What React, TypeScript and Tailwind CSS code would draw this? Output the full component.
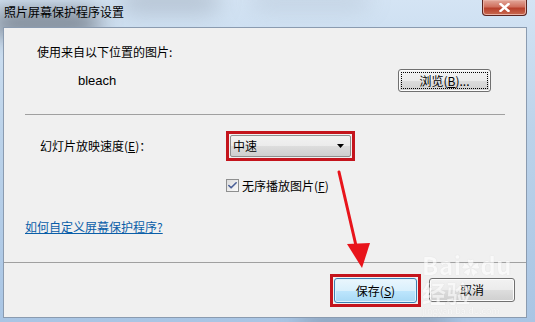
import { Check } from "lucide-react";

const font = { fontFamily: '"Noto Sans CJK SC", "Liberation Sans", sans-serif' };

function Win7Button({ label, focused }: { label: React.ReactNode; focused?: boolean }) {
  return (
    <div
      className={
        focused
          ? "flex h-full w-full items-center justify-center rounded-[3px] border border-[#3c7fb1] bg-[linear-gradient(to_bottom,#eaf6fd_0%,#d9f0fc_50%,#bee6fd_51%,#a7d9f5_100%)] text-[12px] text-black shadow-[inset_0_0_0_1px_#dff2fc]"
          : "flex h-full w-full items-center justify-center rounded-[3px] border border-[#707070] bg-[linear-gradient(to_bottom,#f2f2f2_0%,#ebebeb_50%,#dddddd_51%,#cfcfcf_100%)] text-[12px] text-black shadow-[inset_0_0_0_1px_#fcfcfc]"
      }
    >
      {label}
    </div>
  );
}

function Arrow() {
  return (
    <svg className="pointer-events-none absolute left-0 top-0" width="535" height="322">
      <line x1="339" y1="172" x2="357" y2="250" stroke="#e8141b" strokeWidth="3" strokeLinecap="round" />
      <polygon points="347,244 370,243 362,268" fill="#e8141b" />
    </svg>
  );
}

export default function App() {
  return (
    <div
      className="relative h-[322px] w-[535px] overflow-hidden bg-[linear-gradient(to_bottom,#d4e4f4,#bcd3ea_40%,#a9c5e4)]"
      style={font}
    >
      {/* blurred glass behind the title bar */}
      <div className="absolute left-[-10px] top-[12px] h-[22px] w-[110px] rounded-full bg-[#3a3f48] opacity-70 blur-md" />
      <div className="absolute left-[120px] top-[-8px] h-[18px] w-[100px] rounded-full bg-[#6a7280] opacity-40 blur-md" />
      <div className="absolute left-[250px] top-[-6px] h-[12px] w-[120px] rounded-full bg-[#8a96a6] opacity-40 blur-md" />
      <div className="absolute left-[300px] top-[314px] h-[14px] w-[150px] rounded-full bg-[#4a5260] opacity-50 blur-md" />

      <div className="relative flex h-[27px] items-start justify-between pl-[4px]">
        <span className="mt-[4px] text-[12px] leading-[16px] text-black">照片屏幕保护程序设置</span>
        <div className="mr-[8px] flex h-[16px] w-[45px] items-center justify-center rounded-b-[4px] border border-t-0 border-[#5a2420] bg-[linear-gradient(to_bottom,#e2a79a_0%,#d0705e_45%,#b8402c_55%,#c86a50_100%)] shadow-[inset_0_0_0_1px_#e8b0a4]">
          <svg width="11" height="9" viewBox="0 0 11 9">
            <path d="M1.5 1 L9.5 8 M9.5 1 L1.5 8" stroke="#fff" strokeWidth="2.4" strokeLinecap="square" />
          </svg>
        </div>
      </div>

      <div className="relative ml-[3px] h-[291px] w-[524px] border border-[#8a9bb0] bg-[#f0f0f0] text-[12px] text-black">
        <div className="h-[234px]">
          <div className="ml-[33px] pt-[16px] leading-[16px]">使用来自以下位置的图片:</div>
          <div className="mt-[9px] flex h-[23px] items-center">
            <span className="ml-[74px] text-[13px]" style={{ fontFamily: '"Liberation Sans", sans-serif' }}>bleach</span>
            <div className="ml-auto mr-[35px] h-[23px] w-[93px]">
              <Win7Button
                label={
                  <span className="flex h-[17px] w-[87px] items-center justify-center border border-dotted border-black">
                    浏览(<span className="underline">B</span>)...
                  </span>
                }
              />
            </div>
          </div>
          <div className="ml-[21px] mt-[22px] h-px w-[480px] bg-[#a0a0a0]" />
          <div className="mt-[16px] flex h-[30px] items-center">
            <span className="ml-[36px] w-[186px]">
              幻灯片放映速度(<span className="underline">E</span>)：
            </span>
            <div className="h-[30px] w-[129px] border-[3px] border-[#c4141c] p-px">
              <div className="flex h-full items-center rounded-[2px] border border-[#8e8f8f] bg-[linear-gradient(to_bottom,#f2f2f2_0%,#ebebeb_50%,#dddddd_51%,#cfcfcf_100%)] pl-[2px] pr-[6px]">
                <span className="flex-1">中速</span>
                <svg width="7" height="4" viewBox="0 0 7 4">
                  <polygon points="0,0 7,0 3.5,4" fill="#000" />
                </svg>
              </div>
            </div>
          </div>
          <div className="ml-[222px] mt-[18px] flex h-[13px] items-center gap-[3px]">
            <div className="flex h-[13px] w-[13px] items-center justify-center border border-[#8e8f8f] bg-[linear-gradient(135deg,#dcdcdc,#fbfbfb)]">
              <Check size={11} strokeWidth={3.5} className="text-[#4a5f97]" />
            </div>
            <span className="leading-[13px]">
              无序播放图片(<span className="underline">F</span>)
            </span>
          </div>
          <div className="ml-[21px] mt-[27px] leading-[16px] text-[#0a5ea8] underline">如何自定义屏幕保护程序?</div>
        </div>
        <div className="h-px bg-[#a0a0a0]" />
        <div className="flex items-start pt-[11px]">
          <div className="ml-[326px] h-[33px] w-[91px] border-[3px] border-[#c4141c] p-px">
            <Win7Button
              focused
              label={
                <span>
                  保存(<span className="underline">S</span>)
                </span>
              }
            />
          </div>
          <div className="ml-[8px] mt-[4px] h-[24px] w-[86px]">
            <Win7Button label="取消" />
          </div>
        </div>
        <div className="pointer-events-none absolute left-[418px] top-[224px] flex flex-col text-white opacity-60">
          <span className="text-[24px] font-bold leading-[26px] tracking-wide [text-shadow:0_0_1px_#c0c0c0]">
            Bai<span className="text-[18px]">✿</span>du 经验
          </span>
          <span className="text-[9px] leading-[10px] [text-shadow:0_0_1px_#c0c0c0]">jingyan.baidu.com</span>
        </div>
      </div>
      <Arrow />
    </div>
  );
}
